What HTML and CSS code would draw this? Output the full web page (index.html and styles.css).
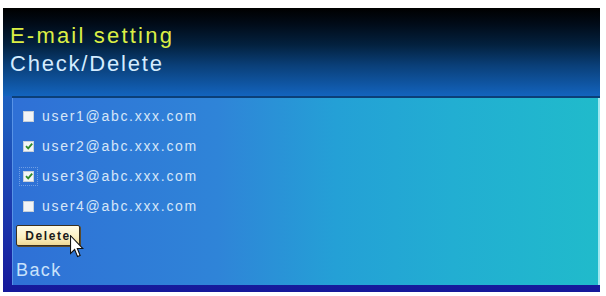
FILE: index.html
```html
<!DOCTYPE html>
<html>
<head>
<meta charset="utf-8">
<link rel="stylesheet" href="styles.css">
</head>
<body>
<div class="screen">
  <div class="header">
    <div class="title">E-mail setting</div>
    <div class="subtitle">Check/Delete</div>
  </div>
  <div class="panel">
    <div class="row"><span class="box"></span><span class="addr">user1@abc.xxx.com</span></div>
    <div class="row"><span class="box"><svg viewBox="0 0 10 10" width="10" height="10"><path d="M2 5.2 L4.2 7.4 L8.2 2.6" fill="none" stroke="#2f8a2a" stroke-width="1.8"/></svg></span><span class="addr">user2@abc.xxx.com</span></div>
    <div class="row"><span class="focus"><span class="box"><svg viewBox="0 0 10 10" width="10" height="10"><path d="M2 5.2 L4.2 7.4 L8.2 2.6" fill="none" stroke="#2f8a2a" stroke-width="1.8"/></svg></span></span><span class="addr">user3@abc.xxx.com</span></div>
    <div class="row"><span class="box"></span><span class="addr">user4@abc.xxx.com</span></div>
    <div class="btn-wrap">
      <button class="btn">Delete</button>
      <svg class="cursor" viewBox="0 0 13 21" width="14" height="23"><path d="M0.5 0.5 L0.5 17 L4.3 13.3 L7 19.8 L9.4 18.8 L6.8 12.4 L12 12.4 Z" fill="#fff" stroke="#111" stroke-width="1"/></svg>
    </div>
    <div class="back">Back</div>
  </div>
</div>
</body>
</html>
```
FILE: styles.css
```css
html, body {
  margin: 0;
  padding: 0;
  background: #ffffff;
}
body {
  width: 606px;
  height: 296px;
  overflow: hidden;
  font-family: "Liberation Sans", Arial, sans-serif;
}
.screen {
  margin: 8px 6px 0 3px;
  width: 597px;
  height: 284px;
  display: flex;
  flex-direction: column;
  background: linear-gradient(180deg, #1a6cc6 0%, #1d5cbe 40%, #1a2fa8 80%, #15189a 100%);
}
.header {
  height: 88px;
  padding: 15px 0 0 7px;
  box-sizing: border-box;
  background: linear-gradient(180deg, #000000 0%, #010b18 18%, #03213f 42%, #0a3f78 65%, #1364be 100%);
}
.title {
  font-size: 22px;
  line-height: 26px;
  letter-spacing: 2.2px;
  color: #dcef45;
}
.subtitle {
  margin-top: 2px;
  font-size: 22px;
  line-height: 26px;
  letter-spacing: 1.8px;
  color: #d4ecff;
}
.panel {
  flex: 1;
  margin: 0 0 7px 9px;
  border-top: 2px solid #0b3f78;
  padding: 3px 0 0 4px;
  background: linear-gradient(90deg, #2f70d6 0%, #2f84d8 35%, #24a0d6 55%, #22aed2 75%, #20bbcb 100%);
  box-shadow: inset 1px 0 0 rgba(150, 200, 255, 0.4), inset -2px 0 0 #9fe8f0;
}
.row {
  height: 30px;
  display: flex;
  align-items: center;
  padding-left: 7px;
}
.box {
  width: 11px;
  height: 11px;
  background: #f2f4f6;
  border: 1px solid #c8d0d8;
  box-sizing: border-box;
  display: flex;
  align-items: center;
  justify-content: center;
}
.box svg {
  display: block;
  flex: none;
}
.focus {
  display: flex;
  padding: 3px;
  margin: -4px;
  border: 1px dotted rgba(230, 240, 255, 0.35);
}
.addr {
  margin-left: 8px;
  font-size: 14px;
  letter-spacing: 1.7px;
  color: #d6e6f8;
}
.btn-wrap {
  position: relative;
  margin-top: 4px;
  height: 21px;
}
.btn {
  display: block;
  width: 64px;
  height: 21px;
  padding: 0;
  margin: 0;
  font-family: "Liberation Sans", Arial, sans-serif;
  font-size: 12px;
  font-weight: bold;
  letter-spacing: 1.6px;
  color: #1a1a1a;
  background: linear-gradient(180deg, #fffbe6 0%, #fbefc0 60%, #efd996 100%);
  border: 1px solid #3a3020;
  border-radius: 2px;
  box-shadow: 1px 1px 0 #5a4a2a;
}
.cursor {
  position: absolute;
  left: 54px;
  top: 10px;
}
.back {
  margin-top: 14px;
  font-size: 18px;
  line-height: 20px;
  letter-spacing: 1.4px;
  color: #c9e2fb;
}
```
